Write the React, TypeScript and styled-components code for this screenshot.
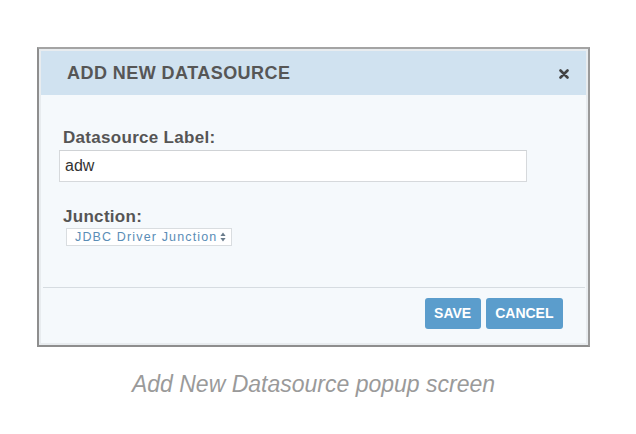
import React from "react";
import styled, { createGlobalStyle } from "styled-components";

const GlobalStyle = createGlobalStyle`
  html, body { margin: 0; padding: 0; background: #ffffff; }
  body { font-family: "Liberation Sans", Arial, sans-serif; }
  * { box-sizing: border-box; }
`;

const Page = styled.div`
  padding: 47px 0 0 37px;
`;

const Figure = styled.div`
  width: 553px;
  display: flex;
  flex-direction: column;
  align-items: center;
`;

const Frame = styled.div`
  width: 553px;
  border: 2px solid #8e8e8e;
  border-top: 2px solid #a4a4a4;
  border-right: 2px solid #9a9a9a;
  padding: 2px;
  background: #e8ecef;
`;

const Dialog = styled.div`
  display: flex;
  flex-direction: column;
  background: #f5f9fc;
`;

const Header = styled.div`
  height: 44px;
  display: flex;
  align-items: center;
  justify-content: space-between;
  padding: 0 16px 0 26px;
  background: #d0e2f0;
`;

const Title = styled.div`
  font-size: 18px;
  font-weight: bold;
  color: #565656;
  letter-spacing: 0.45px;
`;

const Close = styled.button`
  width: 12px;
  height: 12px;
  padding: 0;
  margin-top: 2px;
  border: none;
  background: none;
  display: flex;
  align-items: center;
  justify-content: center;
`;

const Body = styled.div`
  padding: 33px 0 0 18px;
  display: flex;
  flex-direction: column;
  align-items: flex-start;
`;

const Label = styled.div<{ $gap: number }>`
  margin-top: ${(p) => p.$gap}px;
  padding-left: 4px;
  font-size: 17px;
  line-height: 20px;
  font-weight: bold;
  color: #555555;
  letter-spacing: 0.3px;
`;

const TextInput = styled.input`
  margin-top: 2px;
  width: 468px;
  height: 32px;
  padding: 0 5px;
  border: 1px solid #d6d9dc;
  border-top-color: #cfd2d5;
  background: #ffffff;
  font-family: "Liberation Sans", Arial, sans-serif;
  font-size: 16px;
  color: #333333;
  outline: none;
`;

const Select = styled.div`
  margin: 1px 0 0 7px;
  width: 166px;
  height: 18px;
  display: flex;
  align-items: center;
  justify-content: space-between;
  padding: 0 5px 0 8px;
  border: 1px solid #d9dde0;
  background: #ffffff;
  font-size: 12.5px;
  letter-spacing: 1.15px;
  white-space: nowrap;
  color: #5a8db6;
`;

const Divider = styled.div`
  margin: 41px 1px 0 2px;
  height: 1px;
  background: #d6dce1;
`;

const Footer = styled.div`
  display: flex;
  justify-content: flex-end;
  gap: 5px;
  padding: 10px 23px 14px 0;
`;

const Button = styled.button`
  height: 31px;
  padding: 0 9.5px 1px;
  border: none;
  border-radius: 3px;
  background: #5b9dcc;
  color: #ffffff;
  font-family: "Liberation Sans", Arial, sans-serif;
  font-size: 14px;
  font-weight: bold;
`;

const Caption = styled.div`
  margin-top: 24px;
  font-size: 23px;
  font-style: italic;
  color: #9a9a9a;
`;

export default function App() {
  return (
    <>
      <GlobalStyle />
      <Page>
        <Figure>
          <Frame>
            <Dialog>
              <Header>
                <Title>ADD NEW DATASOURCE</Title>
                <Close aria-label="close">
                  <svg width="10" height="10" viewBox="0 0 10 10">
                    <path d="M1.5 1.5 L8.5 8.5 M8.5 1.5 L1.5 8.5" stroke="#444" strokeWidth="2.6" strokeLinecap="round" />
                  </svg>
                </Close>
              </Header>
              <Body>
                <Label $gap={0}>Datasource Label:</Label>
                <TextInput defaultValue="adw" />
                <Label $gap={25}>Junction:</Label>
                <Select>
                  <span>JDBC Driver Junction</span>
                  <svg width="6" height="10" viewBox="0 0 6 10">
                    <path d="M3 0.5 L5.6 4 L0.4 4 Z M3 9.5 L5.6 6 L0.4 6 Z" fill="#6a7c8c" />
                  </svg>
                </Select>
              </Body>
              <Divider />
              <Footer>
                <Button>SAVE</Button>
                <Button>CANCEL</Button>
              </Footer>
            </Dialog>
          </Frame>
          <Caption>Add New Datasource popup screen</Caption>
        </Figure>
      </Page>
    </>
  );
}
